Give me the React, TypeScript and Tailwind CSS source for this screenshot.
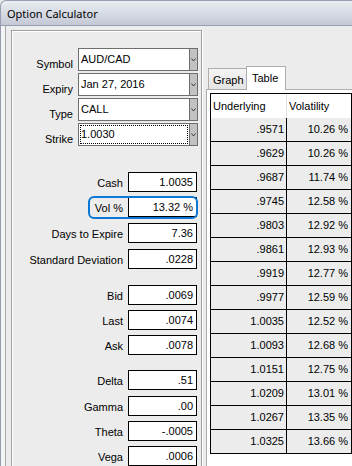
import React from 'react';

type Combo = { label: string; value: string; focus?: boolean };
type Field = { label: string; value: string; mt: string; hl?: boolean };

const combos: Combo[] = [
  { label: 'Symbol', value: 'AUD/CAD' },
  { label: 'Expiry', value: 'Jan 27, 2016' },
  { label: 'Type', value: 'CALL' },
  { label: 'Strike', value: '1.0030', focus: true },
];

const fields: Field[] = [
  { label: 'Cash', value: '1.0035', mt: 'mt-[26px]' },
  { label: 'Vol %', value: '13.32 %', mt: 'mt-[5px]', hl: true },
  { label: 'Days to Expire', value: '7.36', mt: 'mt-[6px]' },
  { label: 'Standard Deviation', value: '.0228', mt: 'mt-[6px]' },
  { label: 'Bid', value: '.0069', mt: 'mt-[16px]' },
  { label: 'Last', value: '.0074', mt: 'mt-[5px]' },
  { label: 'Ask', value: '.0078', mt: 'mt-[5px]' },
  { label: 'Delta', value: '.51', mt: 'mt-[15px]' },
  { label: 'Gamma', value: '.00', mt: 'mt-[6px]' },
  { label: 'Theta', value: '-.0005', mt: 'mt-[5px]' },
  { label: 'Vega', value: '.0006', mt: 'mt-[5px]' },
];

const rows: [string, string][] = [
  ['.9571', '10.26 %'],
  ['.9629', '10.26 %'],
  ['.9687', '11.74 %'],
  ['.9745', '12.58 %'],
  ['.9803', '12.92 %'],
  ['.9861', '12.93 %'],
  ['.9919', '12.77 %'],
  ['.9977', '12.59 %'],
  ['1.0035', '12.52 %'],
  ['1.0093', '12.68 %'],
  ['1.0151', '12.75 %'],
  ['1.0209', '13.01 %'],
  ['1.0267', '13.35 %'],
  ['1.0325', '13.66 %'],
];

const Chevron = () => (
  <svg width="5" height="4" viewBox="0 0 5 4">
    <path d="M0.5 0.5 L2.5 3 L4.5 0.5" fill="none" stroke="#3a3a3a" strokeWidth="1" />
  </svg>
);

const ComboRow = ({ label, value, focus }: Combo) => (
  <div className="flex h-[23px] items-end">
    <span className="w-[61px] text-right leading-[13px]">{label}</span>
    <div className="ml-[5px] flex h-full w-[120px] border border-[#6e6e6e] bg-white">
      <div className="relative flex flex-1 items-center pl-[2px]">
        {focus && <div className="absolute inset-[1px] border border-dotted border-black" />}
        <span>{value}</span>
      </div>
      <div className="flex w-[8px] items-center justify-center border-l border-[#6e6e6e] bg-[#c2c2c2]">
        <Chevron />
      </div>
    </div>
  </div>
);

const FieldRow = ({ label, value, mt, hl }: Field) => (
  <div className={`relative flex h-[20px] items-end ${mt}`}>
    <span className="w-[111px] pb-[2px] text-right leading-[13px]">{label}</span>
    <div className="ml-[5px] flex h-full w-[69px] items-center justify-end border border-black bg-white pr-[3px]">
      {value}
    </div>
    {hl && (
      <div className="absolute left-[76px] top-[-1px] h-[23px] w-[110px] rounded-[6px] border-2 border-[#0a78d4]" />
    )}
  </div>
);

export default function App() {
  return (
    <div className="h-[466px] w-[352px] overflow-hidden bg-[#ececec] font-['Liberation_Sans',Arial,sans-serif] text-[11px] text-black">
      {/* title bar */}
      <div className="flex h-[26px] items-center rounded-tl-[6px] border-b border-l border-t border-[#989eb0] bg-gradient-to-b from-[#eaedf2] to-[#c3c9d5] pl-[6px] pt-[2px] font-['Noto_Sans',sans-serif] text-[11px]">
        Option Calculator
      </div>

      <div className="flex h-[440px]">
        {/* window frame */}
        <div className="w-[6px] shrink-0 border-l border-r border-l-[#979dae] border-r-[#a9a9a9] bg-[#f3f4f6]" />

        {/* left group box */}
        <div className="ml-[5px] mt-[4px] h-[460px] w-[191px] shrink-0 border border-[#a0a0a0] pt-[17px] shadow-[1px_1px_0_#fff,inset_1px_1px_0_#fff]">
          <div className="flex flex-col gap-[2px]">
            {combos.map((c) => (
              <ComboRow key={c.label} {...c} />
            ))}
          </div>
          <div className="flex flex-col">
            {fields.map((f) => (
              <FieldRow key={f.label} {...f} />
            ))}
          </div>
        </div>

        {/* tab control */}
        <div className="ml-[4px] flex min-w-0 flex-1 flex-col pt-[40px]">
          <div className="flex h-[23px] items-end pl-[2px]">
            <div className="flex h-[21px] w-[38px] items-center border-l border-t border-[#adadad] bg-gradient-to-b from-[#f4f4f4] to-[#e4e4e4] pl-[4px] pt-[2px]">
              Graph
            </div>
            <div className="relative z-10 -mb-px flex h-[24px] w-[40px] items-center border-l border-r border-t border-[#adadad] bg-white pl-[5px]">
              Table
            </div>
          </div>
          <div className="flex-1 border-l border-t border-[#adadad] bg-white pl-[3px] pt-[3px]">
            <div className="w-[142px] border-l border-r border-t border-black">
              <div className="flex h-[24px] bg-white pt-[1px]">
                <div className="flex w-[76px] items-center border-r border-[#e2e2e2] pl-[2px]">Underlying</div>
                <div className="flex flex-1 items-center pl-[2px]">Volatility</div>
              </div>
              {rows.map(([u, v]) => (
                <div key={u} className="flex h-[24px] border-b border-black bg-[#ececec]">
                  <div className="flex w-[76px] items-center justify-end border-r border-black pr-[2px]">{u}</div>
                  <div className="flex flex-1 items-center justify-end pr-[3px]">{v}</div>
                </div>
              ))}
            </div>
          </div>
        </div>
      </div>
    </div>
  );
}
